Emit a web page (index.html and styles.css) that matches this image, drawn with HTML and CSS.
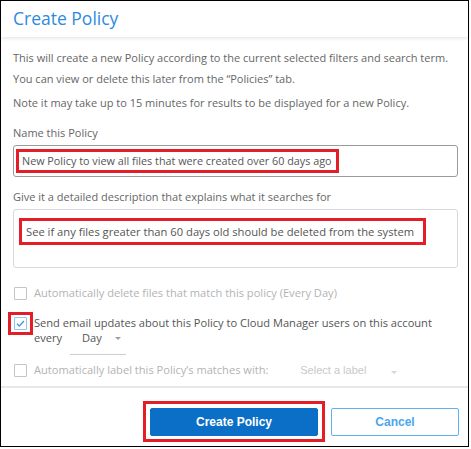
FILE: index.html
```html
<!DOCTYPE html>
<html>
<head>
<meta charset="utf-8">
<link rel="stylesheet" href="styles.css">
</head>
<body>
<div class="dialog">
  <div class="header"><h1 class="title">Create Policy</h1></div>
  <div class="content">
    <p class="text">This will create a new Policy according to the current selected filters and search term.<br>You can view or delete this later from the “Policies” tab.</p>
    <p class="text p2">Note it may take up to 15 minutes for results to be displayed for a new Policy.</p>
    <p class="text label">Name this Policy</p>
    <div class="field name-field"><span class="mark name-mark">New Policy to view all files that were created over 60 days ago</span></div>
    <p class="text label2">Give it a detailed description that explains what it searches for</p>
    <div class="field desc-field"><span class="mark desc-mark">See if any files greater than 60 days old should be deleted from the system</span></div>
    <div class="cb-row row1 disabled">
      <span class="cb"></span>
      <span class="cb-text">Automatically delete files that match this policy (Every Day)</span>
    </div>
    <div class="cb-row row2">
      <span class="cb checked marked"><svg width="11" height="9" viewBox="0 0 11 9"><path d="M2 4.8 L4.3 7 L9 2" fill="none" stroke="#3b9be8" stroke-width="1.3"/></svg></span>
      <span class="cb-text">Send email updates about this Policy to Cloud Manager users on this account<br>every <span class="select day-select">Day<i class="caret"></i></span></span>
    </div>
    <div class="cb-row row3 disabled">
      <span class="cb"></span>
      <span class="cb-text">Automatically label this Policy’s matches with: <span class="select label-select">Select a label<i class="caret light"></i></span></span>
    </div>
  </div>
  <div class="footer">
    <div class="btn-mark"><button class="btn primary">Create Policy</button></div>
    <button class="btn secondary">Cancel</button>
  </div>
</div>
</body>
</html>
```
FILE: styles.css
```css
html, body {
  margin: 0;
  padding: 0;
  background: #fff;
}
.dialog {
  width: 469px;
  height: 447px;
  border: 1px solid #000;
  box-sizing: border-box;
  display: flex;
  flex-direction: column;
  font-family: "Open Sans", sans-serif;
  background: #fff;
}
.header {
  height: 36px;
  flex: none;
  padding-left: 12px;
  box-shadow: 0 1px 4px rgba(0, 0, 0, 0.12);
  position: relative;
  z-index: 1;
}
.title {
  margin: 0;
  font-size: 17.5px;
  font-weight: 400;
  line-height: 35px;
  color: #2f8ae0;
}
.content {
  flex: 1;
  min-height: 0;
  overflow: hidden;
  padding: 10px 10px 0 12px;
}
.text {
  margin: 0;
  font-size: 11px;
  line-height: 21px;
  color: #666;
}
.p2 { margin-top: 3px; }
.label { margin-top: 9px; }
.label2 { margin-top: 9px; }
.field {
  margin-top: 2px;
  box-sizing: border-box;
  border-radius: 3px;
  color: #555;
}
.name-field {
  height: 32px;
  border: 1px solid #9a9a9a;
  padding: 3px 2px 0;
  font-size: 10.8px;
}
.desc-field {
  height: 59px;
  border: 1px solid #d9d9d9;
  padding: 8px 5px 0;
  font-size: 11.2px;
}
.mark {
  display: inline-block;
  box-sizing: border-box;
  border: 3px solid #e41e26;
}
.name-mark {
  height: 24px;
  line-height: 18px;
  padding: 0 5px 0 3px;
}
.desc-mark {
  height: 27px;
  line-height: 21px;
  padding: 0 9px 0 4px;
}
.cb-row {
  display: flex;
  align-items: flex-start;
  font-size: 11.1px;
  line-height: 15px;
  color: #555;
}
.cb-row.disabled { color: #b3b3b3; }
.row1 { margin-top: 17px; }
.row2 { margin-top: 15px; }
.row3 { margin-top: 7px; }
.cb {
  flex: none;
  width: 13px;
  height: 13px;
  box-sizing: border-box;
  border: 1px solid #a6a6a6;
  border-radius: 1px;
  margin: 2px 7px 0 1px;
  position: relative;
  display: flex;
  align-items: center;
  justify-content: center;
}
.disabled .cb { border-color: #c4c4c4; }
.cb.checked {
  border-color: #8cc6f2;
}
.cb.marked::after {
  content: "";
  position: absolute;
  left: -7px;
  top: -6px;
  width: 25px;
  height: 23px;
  box-sizing: border-box;
  border: 3px solid #e41e26;
}
.select {
  display: inline-block;
  position: relative;
  vertical-align: baseline;
}
.day-select {
  width: 56px;
  box-sizing: border-box;
  margin-left: 5px;
  padding: 0 0 9px 12px;
  border-bottom: 1.5px solid #cfcfcf;
}
.label-select {
  margin-left: 29px;
  width: 97px;
  font-family: "Liberation Sans", Arial, sans-serif;
  font-size: 11px;
  color: #c9c9c9;
}
.caret {
  position: absolute;
  top: 7px;
  right: 5px;
  width: 0;
  height: 0;
  border-left: 3.5px solid transparent;
  border-right: 3.5px solid transparent;
  border-top: 3.5px solid #a0a0a0;
}
.caret.light {
  right: 0;
  top: 8px;
  border-top-color: #d6d6d6;
}
.footer {
  flex: none;
  height: 60px;
  box-sizing: border-box;
  border-top: 2px solid #e8e8e8;
  display: flex;
  justify-content: flex-end;
  align-items: flex-start;
  gap: 6px;
  padding: 13px 9px 0 0;
}
.btn-mark {
  border: 3px solid #e41e26;
  padding: 4px 4px 3px;
  display: flex;
}
.btn {
  height: 28px;
  box-sizing: border-box;
  font-family: "Liberation Sans", Arial, sans-serif;
  font-size: 12px;
  font-weight: 700;
  border-radius: 2px;
  padding: 0;
  cursor: pointer;
}
.primary {
  width: 168px;
  background: #0b6fc7;
  border: 1px solid #0b6fc7;
  color: #fff;
}
.secondary {
  width: 128px;
  margin-top: 7px;
  background: #fff;
  border: 1px solid #5fb2f0;
  color: #4aa6ee;
}
```
